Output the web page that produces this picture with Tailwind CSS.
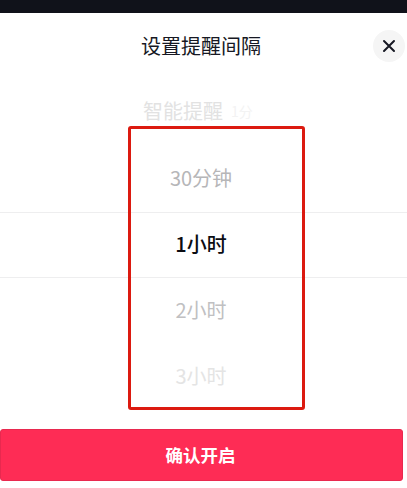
<!DOCTYPE html>
<html lang="zh-CN">
  <head>
    <meta charset="UTF-8" />
    <title>设置提醒间隔</title>
    <script src="https://cdn.jsdelivr.net/npm/@tailwindcss/browser@4"></script>
  </head>
  <body class="bg-white h-[488px] w-[407px] overflow-hidden font-['Noto_Sans_CJK_SC','Liberation_Sans',sans-serif]">
    <div class="h-[13px] bg-[#10121a]"></div>

    <!-- Header -->
    <div class="relative h-[66px] flex items-center justify-center pr-[5px]">
      <h1 class="text-[20px] leading-none font-normal text-[#161823]">设置提醒间隔</h1>
      <button class="absolute right-[2px] top-[17px] w-8 h-8 rounded-full bg-[#f5f5f5] flex items-center justify-center">
        <svg width="14" height="14" viewBox="0 0 14 14" fill="none" stroke="#161823" stroke-width="2" stroke-linecap="round">
          <path d="M2 2l10 10M12 2L2 12" />
        </svg>
      </button>
    </div>

    <!-- Picker -->
    <div class="relative">
      <div class="h-[66px] flex items-center justify-center gap-2 pb-[2px] text-[20px] leading-none text-[#e2e2e2]">
        <span>智能提醒</span><span class="text-[14px] text-[#f3f3f3] w-[33px]">1分</span>
      </div>
      <div class="h-[67px] flex items-center justify-center pr-[5px] pb-[2px] text-[20px] leading-none text-[#b6b6b8]">30分钟</div>
      <div class="h-[66px] flex items-center justify-center pr-[5px] pb-[2px] text-[20px] leading-none font-medium text-[#0b0c12] border-y border-[#eeeeef]">1小时</div>
      <div class="h-[66px] flex items-center justify-center pr-[5px] pb-[2px] text-[20px] leading-none text-[#c0c0c2]">2小时</div>
      <div class="h-[66px] flex items-center justify-center pr-[5px] pb-[2px] text-[20px] leading-none text-[#e4e4e4]">3小时</div>
      <!-- annotation box on top of the screenshot -->
      <div class="absolute left-[128px] top-[47px] w-[177px] h-[284px] border-[3px] border-[#dc1a10] rounded-[3px]"></div>
    </div>

    <!-- Confirm -->
    <div class="mt-[19px] pr-[4px]">
      <button class="w-full h-[52px] rounded-[3px] bg-[#fe2c55] border border-[#e8294f] text-white text-[17.5px] font-bold pr-[2px]">确认开启</button>
    </div>
  </body>
</html>
